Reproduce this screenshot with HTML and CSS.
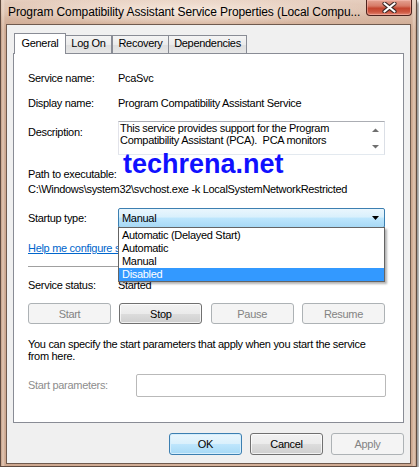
FILE: index.html
```html
<!DOCTYPE html>
<html>
<head>
    <title>Program Compatibility Assistant Service Properties</title>
    <link rel="stylesheet" href="styles.css">
</head>
<body>
    <div class="window">
        <div class="titlebar">
            <span class="title">Program Compatibility Assistant Service Properties (Local Compu...</span>
            <div class="close-btn">
                <svg width="15" height="11" viewBox="0 0 15 11">
                    <path d="M2.5 1.5 L12.5 9.5 M12.5 1.5 L2.5 9.5" stroke="#3b2724" stroke-width="4.2" stroke-linecap="round"/>
                    <path d="M2.5 1.5 L12.5 9.5 M12.5 1.5 L2.5 9.5" stroke="#ffffff" stroke-width="2.2" stroke-linecap="round"/>
                </svg>
            </div>
        </div>

        <div class="client">
            <!-- Tabs -->
            <div class="tabstrip">
                <span class="tab-edge"></span>
                <span class="tab tab-active tab-general">General</span>
                <span class="tab tab-logon">Log On</span>
                <span class="tab tab-recovery">Recovery</span>
                <span class="tab tab-deps">Dependencies</span>
                <span class="tab-fill"></span>
            </div>

            <div class="panel">
                <div class="field row-name">
                    <span class="label">Service name:</span>
                    <span>PcaSvc</span>
                </div>
                <div class="field row-display">
                    <span class="label">Display name:</span>
                    <span>Program Compatibility Assistant Service</span>
                </div>
                <div class="field row-desc">
                    <span class="label desc-label">Description:</span>
                    <div class="desc-box">
                        <div class="desc-text">This service provides support for the Program<br>Compatibility Assistant (PCA).&nbsp; PCA monitors</div>
                        <svg class="desc-scroll" width="17" height="32" viewBox="0 0 17 32">
                            <path d="M5 10 L12 10 L8.5 6.5 Z" fill="#6f6f6f"/>
                            <path d="M5 23 L12 23 L8.5 26.5 Z" fill="#6f6f6f"/>
                        </svg>
                    </div>
                </div>

                <div class="path-label">Path to executable:</div>
                <div class="path">C:\Windows\system32\svchost.exe -k LocalSystemNetworkRestricted</div>

                <div class="field row-startup">
                    <span class="label">Startup type:</span>
                    <div class="combo">
                        <span>Manual</span>
                        <svg width="7" height="4" viewBox="0 0 7 4"><path d="M0 0 L7 0 L3.5 4 Z" fill="#000"/></svg>
                    </div>
                </div>

                <a class="help-link" href="#">Help me configure service startup options.</a>

                <div class="separator"></div>

                <div class="field row-status">
                    <span class="label">Service status:</span>
                    <span>Started</span>
                </div>

                <div class="svc-buttons">
                    <button class="btn" disabled>Start</button>
                    <button class="btn">Stop</button>
                    <button class="btn" disabled>Pause</button>
                    <button class="btn" disabled>Resume</button>
                </div>

                <p class="hint">You can specify the start parameters that apply when you start the service<br>from here.</p>

                <div class="field row-params">
                    <span class="label params-label">Start parameters:</span>
                    <div class="params-input"></div>
                </div>

                <!-- open drop-down of the startup type box -->
                <ul class="combo-list">
                    <li>Automatic (Delayed Start)</li>
                    <li>Automatic</li>
                    <li>Manual</li>
                    <li class="selected">Disabled</li>
                </ul>

                <div class="watermark">techrena.net</div>
            </div>

            <div class="footer">
                <button class="btn btn-default">OK</button>
                <button class="btn">Cancel</button>
                <button class="btn" disabled>Apply</button>
            </div>
        </div>
    </div>
</body>
</html>
```

FILE: styles.css
```css
body {
    margin: 0;
    padding: 0;
    background-color: #ffffff;
    font-family: "Liberation Sans", Arial, sans-serif;
}

.window {
    width: 417px;
    height: 467px;
    box-sizing: border-box;
    border: 1px solid #5f4b40;
    border-top: none;
    background:
        linear-gradient(180deg, rgba(240, 222, 210, 0.7) 0, rgba(240, 222, 210, 0) 30px),
        linear-gradient(90deg, #c59f87 0, #e2c8b5 2px, #cda78f 4px, #d4b19a 50%, #cda78f calc(100% - 4px), #e2c8b5 calc(100% - 2px), #c59f87 100%);
    box-shadow: 2px 2px 3px rgba(0, 0, 0, 0.45);
}

.titlebar {
    height: 24px;
    display: flex;
    justify-content: space-between;
    align-items: flex-start;
    padding: 0 4px 0 7px;
    background: radial-gradient(ellipse 200px 14px at 180px 11px, rgba(255, 246, 238, 0.75), rgba(255, 246, 238, 0));
}

.title {
    padding-top: 5px;
    font-size: 12px;
    line-height: 14px;
    letter-spacing: -0.1px;
    color: #000;
    white-space: nowrap;
}

.close-btn {
    width: 46px;
    height: 16px;
    box-sizing: border-box;
    border: 1px solid #4d231d;
    border-top: none;
    border-radius: 0 0 4px 4px;
    background: linear-gradient(180deg, #e4a393 0%, #d77a67 40%, #c4452f 55%, #cd5842 80%, #e58a76 100%);
    box-shadow: inset 0 0 0 1px rgba(255, 200, 190, 0.45);
    display: flex;
    justify-content: center;
    align-items: center;
}

.client {
    height: 440px;
    margin: 0 5px;
    box-sizing: border-box;
    border: 1px solid #6f5a4e;
    background-color: #f0f0f0;
    padding-top: 8px;
    font-size: 11px;
    line-height: 13px;
    letter-spacing: -0.3px;
    color: #000;
}

/* Tabs */
.tabstrip {
    display: flex;
    align-items: flex-end;
    width: 391px;
    height: 21px;
    margin-left: 6px;
}

.tab-edge {
    width: 1px;
    border-bottom: 1px solid #898c95;
}

.tab-fill {
    flex: 1;
    border-bottom: 1px solid #898c95;
}

.tab {
    height: 19px;
    box-sizing: border-box;
    border: 1px solid #898c95;
    border-left: none;
    padding-top: 1px;
    text-align: center;
    background: linear-gradient(180deg, #f4f4f4 0%, #ebebeb 50%, #dedede 51%, #e6e6e6 100%);
}

.tab-active {
    height: 21px;
    border-left: 1px solid #898c95;
    border-bottom: none;
    padding-top: 3px;
    background: #ffffff;
}

.tab-general { width: 52px; }
.tab-logon { width: 46px; border-left: none; }
.tab-recovery { width: 57px; border-left: 1px solid #898c95; }
.tab-deps { width: 78px; }

.panel {
    position: relative;
    width: 391px;
    height: 369px;
    box-sizing: border-box;
    margin-left: 6px;
    border: 1px solid #898c95;
    border-top: none;
    background-color: #ffffff;
    padding: 18px 18px 0 14px;
}

.field {
    display: flex;
    align-items: flex-start;
}

.label {
    width: 90px;
    flex: none;
}

.row-display { margin-top: 12px; }

.row-desc { margin-top: 11px; }

.desc-label { margin-top: 5px; }

.desc-box {
    width: 267px;
    height: 34px;
    box-sizing: border-box;
    border: 1px solid;
    border-color: #abadb3 #dbdfe6 #e3e9ef #e2e3ea;
    display: flex;
    overflow: hidden;
}

.desc-text {
    flex: 1;
    padding-left: 1px;
    line-height: 12px;
    white-space: nowrap;
    overflow: hidden;
}

.desc-scroll {
    flex: none;
}

.path-label { margin-top: 13px; }

.path { margin-top: 2px; }

.row-startup {
    margin-top: 12px;
    align-items: center;
}

.combo {
    width: 267px;
    height: 20px;
    box-sizing: border-box;
    border: 1px solid #3c7fb1;
    border-radius: 2px;
    background: linear-gradient(180deg, #eaf6fd 0%, #d9f0fc 45%, #bee6fd 50%, #a7d9f5 100%);
    display: flex;
    justify-content: space-between;
    align-items: center;
    padding: 0 5px 0 3px;
    line-height: 18px;
}

.help-link {
    display: block;
    margin-top: 14px;
    color: #0066cc;
    text-decoration: underline;
}

.separator {
    margin-top: 11px;
    border-top: 1px solid #a0a0a0;
}

.row-status { margin-top: 12px; }

.svc-buttons {
    margin-top: 11px;
    display: flex;
    justify-content: space-between;
}

.btn {
    width: 83px;
    height: 21px;
    box-sizing: border-box;
    margin: 0;
    padding: 0;
    border: 1px solid #707070;
    border-radius: 3px;
    background: linear-gradient(180deg, #f2f2f2 0%, #ebebeb 50%, #dddddd 51%, #cfcfcf 100%);
    box-shadow: inset 0 0 0 1px rgba(255, 255, 255, 0.7);
    font-family: inherit;
    font-size: 11px;
    letter-spacing: -0.3px;
    color: #000;
}

.btn:disabled {
    border-color: #adb2b5;
    background: #f4f4f4;
    box-shadow: none;
    color: #838383;
}

.hint {
    margin: 14px 0 0 0;
    line-height: 12px;
}

.row-params {
    margin-top: 12px;
    align-items: center;
}

.params-label {
    width: 108px;
    color: #8d8d8d;
}

.params-input {
    width: 250px;
    height: 23px;
    flex: none;
    box-sizing: border-box;
    border: 1px solid #b9b9b9;
    border-radius: 2px;
    background: #ffffff;
}

/* Open list, lies over the rows below the combo box */
.combo-list {
    position: absolute;
    left: 104px;
    top: 173px;
    width: 267px;
    margin: 0;
    padding: 1px 0 0 0;
    box-sizing: border-box;
    list-style: none;
    border: 1px solid #646464;
    background: #ffffff;
    box-shadow: 2px 2px 2px rgba(0, 0, 0, 0.3);
}

.combo-list li {
    height: 13px;
    padding-left: 3px;
    white-space: nowrap;
}

.combo-list .selected {
    background-color: #3399ff;
    color: #ffffff;
}

.watermark {
    position: absolute;
    left: 109px;
    top: 97px;
    font-size: 27px;
    line-height: 27px;
    font-weight: bold;
    letter-spacing: 0;
    color: #1010ff;
    white-space: nowrap;
}

.footer {
    margin-top: 10px;
    padding-right: 6px;
    display: flex;
    justify-content: flex-end;
    gap: 8px;
}

.footer .btn {
    width: 73px;
    height: 22px;
}

.btn-default {
    border-color: #3c7fb1;
    background: linear-gradient(180deg, #eaf6fd 0%, #d9f0fc 50%, #bee6fd 51%, #a7d9f5 100%);
    box-shadow: inset 0 0 0 1px #d5eefc;
}
```
